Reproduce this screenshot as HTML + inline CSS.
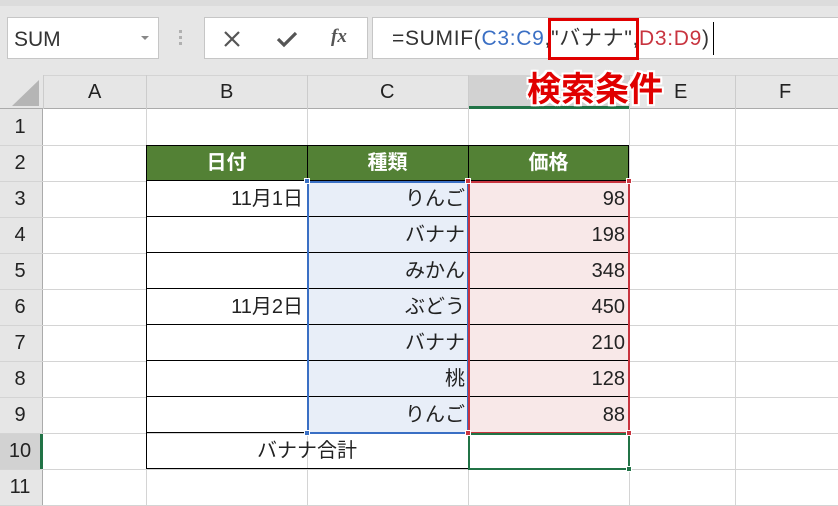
<!DOCTYPE html><html><head><meta charset="utf-8"><style>
*{margin:0;padding:0;box-sizing:border-box}
body{width:838px;height:506px;overflow:hidden;background:#fff;position:relative;font-family:"Liberation Sans","Noto Sans CJK JP",sans-serif;color:#222}
.a{position:absolute}
.t{position:absolute;font-size:20px;line-height:36px;white-space:nowrap}
</style></head><body>
<div class="a" style="left:0;top:0;width:838px;height:109px;background:#e6e6e6"></div>
<div class="a" style="left:0;top:0;width:838px;height:6px;background:#dcdcdc"></div>
<div class="a" style="left:7px;top:17px;width:152px;height:42px;background:#fff;border:1px solid #c6c6c6"></div>
<div class="t" style="left:14px;top:22px;font-size:21px;color:#333">SUM</div>
<div class="a" style="left:141px;top:36px;width:0;height:0;border-left:4px solid transparent;border-right:4px solid transparent;border-top:4px solid #888"></div>
<div class="a" style="left:179px;top:30px;width:3px;height:3px;background:#b0b0b0;box-shadow:0 6px #b0b0b0,0 12px #b0b0b0"></div>
<div class="a" style="left:204px;top:17px;width:164px;height:42px;background:#fff;border:1px solid #c6c6c6"></div>
<svg class="a" style="left:222px;top:30px" width="20" height="18"><path d="M3 2L17 16M17 2L3 16" stroke="#555" stroke-width="2.2"/></svg>
<svg class="a" style="left:275px;top:30px" width="24" height="18"><path d="M3 9L9 15L21 3" stroke="#555" stroke-width="3.2" fill="none"/></svg>
<div class="a" style="left:331px;top:26px;font:italic bold 19px 'Liberation Serif',serif;color:#555">fx</div>
<div class="a" style="left:372px;top:17px;width:466px;height:42px;background:#fff;border:1px solid #c6c6c6;border-right:none"></div>
<div class="t" style="left:392px;top:21px;font-size:21px;color:#333;letter-spacing:0.7px">=SUMIF(<span style="color:#3a6fc4">C3:C9</span>,"バナナ",<span style="color:#c8343f">D3:D9</span>)</div>
<div class="a" style="left:713px;top:22px;width:1px;height:33px;background:#000"></div>
<div class="a" style="left:548px;top:18px;width:91px;height:42px;border:3px solid #e00000"></div>
<div class="a" style="left:43px;top:75px;width:795px;height:1px;background:#d4d4d4"></div>
<div class="a" style="left:0;top:108px;width:838px;height:1px;background:#ababab"></div>
<div class="a" style="left:468px;top:75px;width:161px;height:34px;background:#d2d2d2"></div>
<div class="a" style="left:468px;top:106px;width:161px;height:3px;background:#217346"></div>
<svg class="a" style="left:10px;top:78px" width="30" height="28"><path d="M29 2V28H2Z" fill="#b5b5b5"/></svg>
<div class="a" style="left:43px;top:75px;width:1px;height:34px;background:#ccc"></div>
<div class="a" style="left:146px;top:75px;width:1px;height:34px;background:#ccc"></div>
<div class="a" style="left:307px;top:75px;width:1px;height:34px;background:#ccc"></div>
<div class="a" style="left:468px;top:75px;width:1px;height:34px;background:#ccc"></div>
<div class="a" style="left:629px;top:75px;width:1px;height:34px;background:#ccc"></div>
<div class="a" style="left:735px;top:75px;width:1px;height:34px;background:#ccc"></div>
<div class="t" style="left:88px;top:74px">A</div>
<div class="t" style="left:220px;top:74px">B</div>
<div class="t" style="left:380px;top:74px">C</div>
<div class="t" style="left:674px;top:74px">E</div>
<div class="t" style="left:779px;top:74px">F</div>
<div class="a" style="left:527px;top:64px;font:bold 34px 'Noto Sans CJK JP',sans-serif;color:#e00000;line-height:46px;text-shadow:2px 0 #fff,-2px 0 #fff,0 2px #fff,0 -2px #fff,2px 2px #fff,-2px -2px #fff,2px -2px #fff,-2px 2px #fff">検索条件</div>
<div class="a" style="left:0;top:109px;width:43px;height:397px;background:#e6e6e6;border-right:1px solid #ababab"></div>
<div class="a" style="left:0;top:433px;width:43px;height:36px;background:#d2d2d2;border-right:3px solid #217346"></div>
<div id="g"></div>
<script>
var h='';
for(var i=1;i<=11;i++){var y=109+(i-1)*36;
h+='<div class="a" style="left:0;top:'+(y+36)+'px;width:838px;height:1px;background:#d4d4d4"></div>';
h+='<div class="t" style="left:0;width:40px;text-align:center;top:'+y+'px">'+i+'</div>';}
[146,307,468,629,735].forEach(function(x){h+='<div class="a" style="left:'+x+'px;top:109px;width:1px;height:397px;background:#d4d4d4"></div>';});
document.getElementById('g').innerHTML=h;
</script>
<div class="a" style="left:307px;top:181px;width:161px;height:252px;background:#e8eef8"></div>
<div class="a" style="left:468px;top:181px;width:161px;height:252px;background:#f8e8e8"></div>
<div class="a" style="left:146px;top:181px;width:161px;height:252px;background:#fff"></div>
<div class="a" style="left:146px;top:145px;width:483px;height:36px;background:#538135;border:1px solid #000"></div>
<div class="a" style="left:307px;top:145px;width:1px;height:36px;background:#000"></div>
<div class="a" style="left:468px;top:145px;width:1px;height:36px;background:#000"></div>
<div class="t" style="left:146px;width:161px;text-align:center;top:145px;color:#fff;font-weight:bold">日付</div>
<div class="t" style="left:307px;width:161px;text-align:center;top:145px;color:#fff;font-weight:bold">種類</div>
<div class="t" style="left:468px;width:161px;text-align:center;top:145px;color:#fff;font-weight:bold">価格</div>
<div id="tb"></div>
<script>
var c=['りんご','バナナ','みかん','ぶどう','バナナ','桃','りんご'],p=[98,198,348,450,210,128,88],d={0:'11月1日',3:'11月2日'},s='';
for(var i=0;i<7;i++){var y=181+i*36;
s+='<div class="a" style="left:146px;top:'+(y+35)+'px;width:483px;height:1px;background:#000"></div>';
s+='<div class="t" style="left:146px;width:157px;text-align:right;top:'+y+'px">'+(d[i]||'')+'</div>';
s+='<div class="t" style="left:307px;width:158px;text-align:right;top:'+y+'px">'+c[i]+'</div>';
s+='<div class="t" style="left:468px;width:157px;text-align:right;top:'+y+'px">'+p[i]+'</div>';}
document.getElementById('tb').innerHTML=s;
</script>
<div class="a" style="left:146px;top:181px;width:1px;height:288px;background:#000"></div>
<div class="a" style="left:146px;top:468px;width:322px;height:1px;background:#000"></div>
<div class="t" style="left:146px;width:322px;text-align:center;top:433px">バナナ合計</div>
<div class="a" style="left:307px;top:181px;width:162px;height:253px;border:2px solid #3a6fc4"></div>
<div class="a" style="left:468px;top:181px;width:162px;height:253px;border:2px solid #c8343f"></div>
<div class="a" style="left:468px;top:433px;width:162px;height:37px;border:2px solid #217346"></div>
<div class="a" style="left:304px;top:178px;width:6px;height:6px;background:#3a6fc4;border:1px solid #fff"></div>
<div class="a" style="left:304px;top:430px;width:6px;height:6px;background:#3a6fc4;border:1px solid #fff"></div>
<div class="a" style="left:465px;top:178px;width:6px;height:6px;background:#c8343f;border:1px solid #fff"></div>
<div class="a" style="left:626px;top:178px;width:6px;height:6px;background:#c8343f;border:1px solid #fff"></div>
<div class="a" style="left:465px;top:430px;width:6px;height:6px;background:#c8343f;border:1px solid #fff"></div>
<div class="a" style="left:626px;top:430px;width:6px;height:6px;background:#c8343f;border:1px solid #fff"></div>
<div class="a" style="left:626px;top:466px;width:6px;height:6px;background:#217346;border:1px solid #fff"></div>
</body></html>
